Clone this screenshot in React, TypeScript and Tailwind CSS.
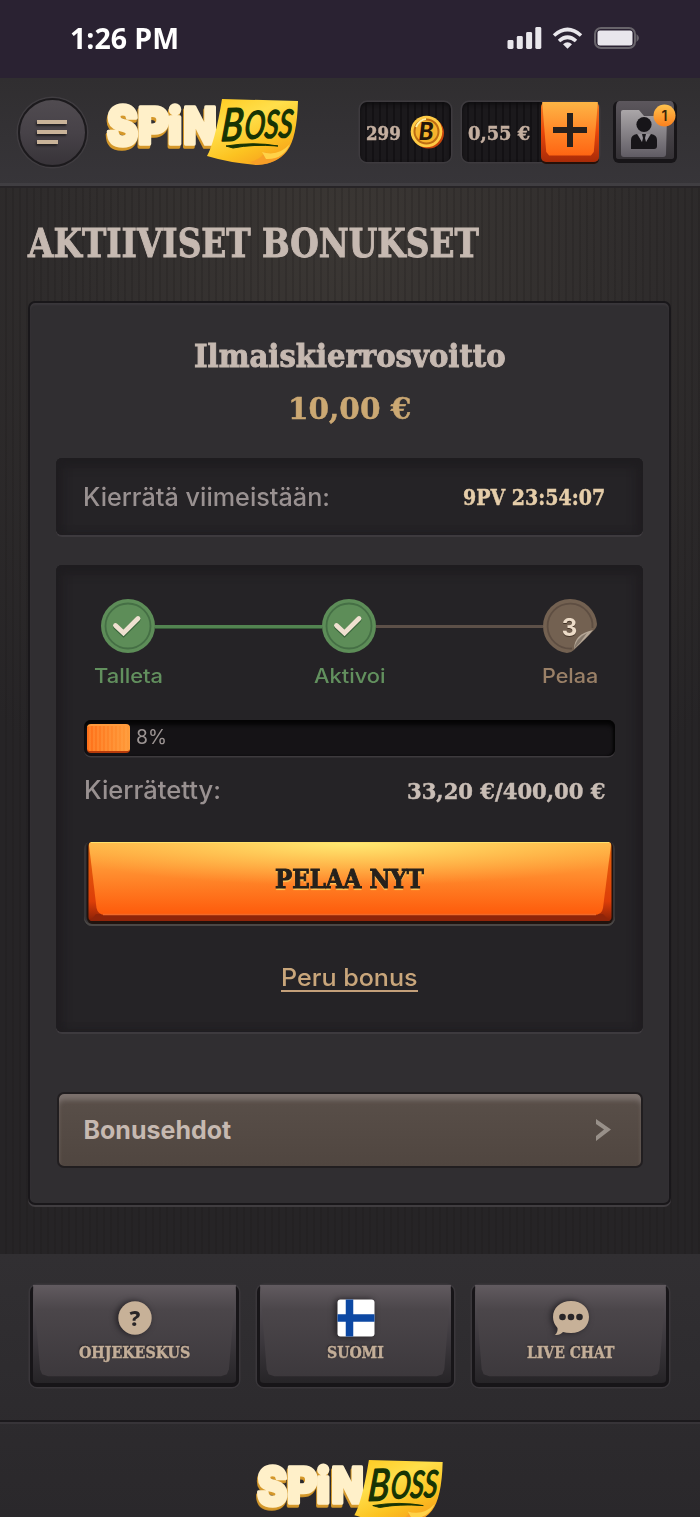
import { useLayoutEffect, useRef, useState } from "react";
import type { ReactNode } from "react";

const SLAB = "font-['DejaVu_Serif',serif] font-bold [-webkit-text-stroke:0.5px_currentColor]";
const SLAB_HEAVY = "font-['DejaVu_Serif',serif] font-bold [-webkit-text-stroke:1px_currentColor]";
const SANS = "font-['Inter',sans-serif]";

/** Single line of text condensed or stretched to a set measure. */
function Line({ w, className = "", children }: { w: number; className?: string; children: ReactNode }) {
  const ref = useRef<HTMLSpanElement>(null);
  const [scale, setScale] = useState(1);
  useLayoutEffect(() => {
    if (ref.current) setScale(w / ref.current.offsetWidth);
  }, [w]);
  return (
    <span className="flex shrink-0" style={{ width: w }}>
      <span
        ref={ref}
        className={`shrink-0 origin-left whitespace-nowrap leading-none ${className}`}
        style={{ transform: `scaleX(${scale})` }}
      >
        {children}
      </span>
    </span>
  );
}

function Logo({ id, className }: { id: string; className: string }) {
  return (
    <svg viewBox="0 0 192 68" className={`overflow-visible ${className}`} role="img" aria-label="SpinBoss">
      <defs>
        <linearGradient id={`${id}n`} x1="0" y1="0" x2="0.6" y2="1">
          <stop offset="0" stopColor="#ffc81c" />
          <stop offset="0.4" stopColor="#ffdf4b" />
          <stop offset="0.75" stopColor="#fcc321" />
          <stop offset="1" stopColor="#f8a51e" />
        </linearGradient>
      </defs>
      <g
        className="[filter:drop-shadow(-0.5px_3px_0_#d5982a)]"
        fontFamily="Inter, sans-serif"
        fontWeight="900"
        fill="#fff0c9"
        stroke="#fff0c9"
        strokeWidth="3.6"
        strokeLinejoin="round"
      >
        <text x="1" y="47" fontSize="54" textLength="31" lengthAdjust="spacingAndGlyphs">S</text>
        <text x="32" y="45.5" fontSize="51" textLength="31" lengthAdjust="spacingAndGlyphs">P</text>
        <text x="62" y="45.5" fontSize="50" textLength="14" lengthAdjust="spacingAndGlyphs">i</text>
        <text x="77.500" y="45.5" fontSize="51" textLength="33" lengthAdjust="spacingAndGlyphs">N</text>
      </g>
      <path d="M116 1L192 3Q191 40 181 53Q171 66 151 67Q124 65 101 58Q109 44 116 1Z" fill={`url(#${id}n)`} />
      <path d="M144 64Q156 61 158 54Q172 60 184 47Q174 66 151 67Q147 66 144 64Z" fill="#f79a2b" opacity=".7" />
      <path d="M156 54Q172 59 184 46Q177 62 160 61Z" fill="#ffd248" />
      <g fill="#173404" stroke="#173404" strokeWidth="1.500" strokeLinejoin="round" fontFamily="Lato, sans-serif" fontStyle="italic" fontWeight="400" transform="rotate(-2 115 44) skewX(-7)">
        <text x="119.500" y="43" fontSize="45" textLength="22" lengthAdjust="spacingAndGlyphs">B</text>
        <text x="143" y="41.5" fontSize="38" textLength="48" lengthAdjust="spacingAndGlyphs">OSS</text>
      </g>
      <path d="M120 48Q148 43.500 172 48Q147 46 127 50Z" fill="#173404" stroke="#173404" strokeWidth="1" />
    </svg>
  );
}

function StatusBar() {
  return (
    <div className="flex h-[78px] items-center justify-between bg-[#2a2232] pl-[70px] pr-[61px]">
      <Line w={109} className="-mt-[3px] font-['Open_Sans',sans-serif] text-[29px] font-bold text-white">
        1:26 PM
      </Line>
      <svg width="132" height="24" viewBox="0 0 132 24" fill="#e9e7ec">
        <rect x="0.500" y="13" width="6" height="9" rx="1.4" />
        <rect x="9.8" y="9" width="6" height="13" rx="1.4" />
        <rect x="19.1" y="5" width="6" height="17" rx="1.4" />
        <rect x="28.3" y="0" width="6" height="22" rx="1.4" />
        <g fill="none" stroke="#e9e7ec" strokeWidth="3.600">
          <path d="M47 8.500Q60.500 -3.500 74 8.500" />
          <path d="M52 14Q60.500 6.5 69 14" />
        </g>
        <path d="M56 17.2Q60.500 13.2 65 17.2L60.500 21.8Z" />
        <rect x="88" y="1" width="40" height="20" rx="6" fill="none" stroke="#68646b" strokeWidth="2" />
        <rect x="90.500" y="3.500" width="35" height="15" rx="2.5" />
        <path d="M129.5 7Q132 9 132 11Q132 13 129.5 15Z" fill="#68646b" />
      </svg>
    </div>
  );
}

const WELL =
  "bg-[#1b191c] bg-[repeating-linear-gradient(90deg,transparent_0_5px,#131114_5px_7px)] shadow-[0_0_0_1.5px_#3e3b3f,inset_0_2px_4px_#0d0c0e]";

function Header() {
  return (
    <header className="flex h-[110px] items-center border-b-2 border-[#272427] bg-gradient-to-b from-[#302e30] to-[#373539] pl-[18px] pr-[22px] shadow-[inset_0_-3px_0_#403e42]">
      <button className="flex size-[69px] shrink-0 flex-col justify-center gap-[6px] rounded-full border-2 border-[#1c1a1d] bg-gradient-to-b from-[#504b50] via-[#474248] to-[#383439] pl-[17px] shadow-[0_0_0_1.5px_#403d41]">
        <span className="h-[4px] w-[30px] bg-[#c9b399] shadow-[-1px_2px_2px_#242124]" />
        <span className="h-[4px] w-[30px] bg-[#c9b399] shadow-[-1px_2px_2px_#242124]" />
        <span className="h-[4px] w-[21px] bg-[#c9b399] shadow-[-1px_2px_2px_#242124]" />
      </button>
      <Logo id="top" className="ml-[19px] h-[68px] w-[192px] shrink-0" />
      <div className={`ml-[62px] flex h-[60px] w-[91px] shrink-0 items-center rounded-[7px] pl-[6px] ${WELL}`}>
        <Line w={35} className={`${SLAB} mt-[2px] text-[19px] text-[#c4afa0]`}>299</Line>
        <svg width="36" height="38" viewBox="0 0 36 38" className="ml-[8px]">
          <circle cx="19.5" cy="20" r="15.5" fill="#c9460c" />
          <circle cx="17.5" cy="18.5" r="15.8" fill="#ffcb45" />
          <circle cx="17.5" cy="18.5" r="12" fill="#f6b22c" stroke="#bd6c13" strokeWidth="2" />
          <path d="M7 14Q10 7 17 6" fill="none" stroke="#fff0a0" strokeWidth="2" />
          <text x="9.500" y="27" fontFamily="Lato, sans-serif" fontSize="24" fontStyle="italic" fontWeight="900" fill="#24150a" textLength="15" lengthAdjust="spacingAndGlyphs">B</text>
        </svg>
      </div>
      <div className={`ml-[11px] flex h-[60px] w-[137px] shrink-0 items-center justify-between rounded-[7px] pl-[6px] ${WELL}`}>
        <Line w={62} className={`${SLAB} mt-[2px] text-[19px] text-[#c4afa0]`}>0,55 €</Line>
        <button className="-mt-px flex h-[60px] w-[58px] items-center justify-center rounded-[5px] bg-gradient-to-b from-[#f07a20] via-[#e8460a] to-[#a82b08] shadow-[0_2px_0_#261109]">
          <span className="flex h-[60px] w-[58px] items-start justify-center bg-gradient-to-b from-[#fdb545] via-[#ff8526] to-[#fe5b0b] [clip-path:polygon(2%_1%,98%_1%,91%_84%,86%_90%,14%_90%,9%_84%)]">
            <svg width="34" height="34" viewBox="0 0 34 34" className="mr-px mt-[11px]">
              <path d="M17 0V34M0 17H34" stroke="#26201d" strokeWidth="6" />
            </svg>
          </span>
        </button>
      </div>
      <button className="ml-[14px] h-[62px] w-[64px] shrink-0 rounded-[6px] border-x-[3px] border-b-[4px] border-[#171518] bg-gradient-to-b from-[#5c575d] to-[#353236]">
        <svg width="58" height="57" viewBox="617 101 58 57" className="overflow-visible">
          <defs>
            <linearGradient id="folder" x1="0" y1="0" x2="0" y2="1">
              <stop offset="0" stopColor="#aaa6a8" />
              <stop offset="1" stopColor="#605c64" />
            </linearGradient>
            <linearGradient id="badge" x1="0" y1="0" x2="0" y2="1">
              <stop offset="0" stopColor="#ffc34e" />
              <stop offset="1" stopColor="#fb801d" />
            </linearGradient>
          </defs>
          <path d="M622 111Q622 109 624 109H640L645 115H668L667 153Q667 156 664 156H625Q622 156 622 153Z" fill="url(#folder)" />
          <circle cx="645" cy="123.5" r="7.6" fill="#171519" />
          <path d="M632 148V139Q632 134 638 133L645 144L652 133Q658 134 658 139V145Q658 148 655 148Z" fill="#171519" />
          <path d="M639 133H651L645 145Z" fill="#969298" />
          <path d="M643 133H647L646 137L647.5 143L645 146L642.5 143L644 137Z" fill="#171519" />
          <circle cx="665.500" cy="114.5" r="11" fill="url(#badge)" />
          <text x="665.500" y="119.5" textAnchor="middle" fontFamily="Inter, sans-serif" fontSize="14" fontWeight="600" fill="#3b2408">1</text>
        </svg>
      </button>
    </header>
  );
}

const INSET =
  "rounded-[6px] bg-[#252326] shadow-[0_2px_0_#3d3a3e,inset_0_8px_10px_#1f1d20,inset_-7px_0_9px_#211f22,inset_7px_0_9px_#211f22]";

function Step({ label, w, state }: { label: string; w: number; state: "done" | "next" }) {
  const done = state === "done";
  return (
    <div className="flex w-[54px] flex-col items-center">
      <svg width="54" height="54" viewBox="0 0 54 54" className="shrink-0">
        {done ? (
          <>
            <circle cx="27" cy="27" r="27" fill="#5d8d58" />
            <circle cx="27" cy="27" r="22.5" fill="#5d8d58" stroke="#456f45" strokeWidth="1.8" />
            <path d="M14.5 26.5L22.5 34L37 19.5" fill="none" stroke="#38643a" strokeWidth="4.8" strokeLinecap="round" transform="translate(0 1.5)" />
            <path d="M14.5 26.5L22.5 34L37 19.5" fill="none" stroke="#efe0d0" strokeWidth="4.8" strokeLinecap="round" />
          </>
        ) : (
          <>
            <path d="M27 0A27 27 0 0 1 54 25Q54 29 49 33L31 51Q28 54 24 54A27 27 0 0 1 0 27A27 27 0 0 1 27 0Z" fill="#736151" />
            <path d="M29 49.500A22.5 22.5 0 1 1 49.500 29" fill="none" stroke="#5e4e42" strokeWidth="1.8" />
            <path d="M31 50Q31 35 50 31Q43 40 31 50Z" fill="#b5a797" />
            <path d="M31 50Q33 39 44 34Q38 43 31 50Z" fill="#85786b" />
            <text x="26.500" y="36.500" textAnchor="middle" fontFamily="Inter, sans-serif" fontSize="24" fontWeight="700" fill="#eddcc8" className="[filter:drop-shadow(0_1.5px_0_#443427)]">3</text>
          </>
        )}
      </svg>
      <div className="mt-[13px]">
        <Line w={w} className={`${SANS} text-[20px] font-medium ${done ? "text-[#62905e]" : "text-[#9a8067]"}`}>{label}</Line>
      </div>
    </div>
  );
}

function PlayButton() {
  return (
    <button className="relative mt-[38px] flex h-[85px] w-full shrink-0 items-center justify-center rounded-[8px] shadow-[inset_0_-2px_0_#4a4745,inset_2px_-2px_0_#373436,inset_-2px_-2px_0_#373436]">
      <svg className="absolute inset-0" width="531" height="85" viewBox="0 0 531 85">
        <defs>
          <linearGradient id="playFace" x1="0" y1="0" x2="0" y2="1">
            <stop offset="0" stopColor="#ffb748" />
            <stop offset=".45" stopColor="#ff8b2d" />
            <stop offset="1" stopColor="#fe5a0b" />
          </linearGradient>
          <linearGradient id="playSide" x1="0" y1="0" x2="0" y2="1">
            <stop offset="0" stopColor="#e8650d" />
            <stop offset=".75" stopColor="#dc3d08" />
            <stop offset="1" stopColor="#8a2107" />
          </linearGradient>
          <radialGradient id="playGlow" cx=".5" cy="0" r=".6">
            <stop offset="0" stopColor="#fff178" stopOpacity=".9" />
            <stop offset="1" stopColor="#ffd25a" stopOpacity="0" />
          </radialGradient>
        </defs>
        <rect x="3" y="1" width="526" height="82" rx="6" fill="#21130e" />
        <rect x="4.5" y="1" width="523" height="79" rx="4" fill="url(#playSide)" />
        <path d="M12 73H519L526 80H6Z" fill="#8f2409" />
        <path d="M5 4Q5 1 8 1H524Q527 1 527 4L519 67Q518 74 510 74H21Q14 74 12.5 67Z" fill="url(#playFace)" />
        <path d="M5 4Q5 1 8 1H524Q527 1 527 4L519 67Q518 74 510 74H21Q14 74 12.5 67Z" fill="url(#playGlow)" />
        <path d="M19 73.5H512" stroke="#f26929" strokeWidth="1.5" />
        <path d="M7 1.5H525" stroke="#ffe06b" strokeWidth="1" />
      </svg>
      <span className="relative -mt-[9px]">
        <Line w={149} className={`${SLAB_HEAVY} text-[26px] text-[#26211c] [text-shadow:0_2px_1px_#ffc95a]`}>PELAA NYT</Line>
      </span>
    </button>
  );
}

function BonusCard() {
  return (
    <section className="ml-[28px] mr-[29px] flex h-[904px] flex-col items-center rounded-[7px] border-2 border-[#19171a] bg-[#302e31] px-[26px] shadow-[0_2px_0_#403d40,inset_0_2px_2px_#3a373b]">
      <h2 className="mt-[37px]">
        <Line w={312} className={`${SLAB_HEAVY} text-[32px] text-[#c6b9b1]`}>Ilmaiskierrosvoitto</Line>
      </h2>
      <div className="mt-[22px]">
        <Line w={123} className={`${SLAB} text-[30px] text-[#cba873]`}>10,00 €</Line>
      </div>
      <div className={`mt-[34px] flex h-[77px] w-full shrink-0 items-center justify-between pl-[27px] pr-[38px] ${INSET}`}>
        <Line w={247} className={`${SANS} mt-px text-[25px] font-medium text-[#999191]`}>Kierrätä viimeistään:</Line>
        <Line w={142} className={`${SLAB} text-[23px] text-[#e5cda9]`}>9PV 23:54:07</Line>
      </div>
      <div className={`mt-[30px] flex h-[467px] w-full shrink-0 flex-col px-[28px] ${INSET}`}>
        <div className="mt-[34px] flex items-start justify-between pl-[17px] pr-[18px]">
          <Step label="Talleta" w={69} state="done" />
          <div className="mt-[26px] h-[3px] flex-1 bg-[#538451] shadow-[0_1px_0_#365a38]" />
          <Step label="Aktivoi" w={71} state="done" />
          <div className="mt-[26px] h-[3px] flex-1 bg-[#5d5048]" />
          <Step label="Pelaa" w={56} state="next" />
        </div>
        <div className="mt-[34px] flex h-[36px] shrink-0 items-center rounded-[7px] bg-[#151316] pl-[3px] shadow-[0_1.5px_0_#3d3a3d,inset_0_5px_4px_#050505,inset_-2px_0_2px_#080708]">
          <div className="h-[29px] w-[43px] rounded-[4px] border-y-2 border-b-[#b83b0a] border-t-[#ff9a3c] bg-[repeating-linear-gradient(90deg,#ff9b3a00_0_2px,#ffad5540_2px_4px),linear-gradient(90deg,#ff7019,#ff9b3a)]" />
          <div className="-mt-[2px] ml-[6px]">
            <Line w={31} className={`${SANS} text-[20px] text-[#9d9594]`}>8%</Line>
          </div>
        </div>
        <div className="mt-[22px] flex items-center justify-between pr-[10px]">
          <Line w={137} className={`${SANS} text-[25px] font-medium text-[#999191]`}>Kierrätetty:</Line>
          <Line w={198} className={`${SLAB} text-[23px] text-[#c9bdb5]`}>33,20 €/400,00 €</Line>
        </div>
        <PlayButton />
        <a className="mx-auto mt-[40px] block border-b-2 border-[#c4a07a]">
          <Line w={137} className={`${SANS} text-[24px] font-medium text-[#c9a67b]`}>Peru bonus</Line>
        </a>
      </div>
      <button className="mt-[60px] flex h-[76px] w-[586px] shrink-0 items-center justify-between rounded-[7px] border-2 border-[#211e20] bg-gradient-to-b from-[#594f49] to-[#504640] pl-[25px] pr-[30px] shadow-[inset_0_7px_5px_-1px_#7b716d]">
        <Line w={148} className={`${SANS} text-[25px] font-bold text-[#c6b9b1]`}>Bonusehdot</Line>
        <svg width="16" height="22" viewBox="0 0 16 22">
          <path d="M1 0L16 10.5L1 22V17L9 10.5L1 5Z" fill="#989089" />
        </svg>
      </button>
    </section>
  );
}

function FooterButton({ label, w, width, children }: { label: string; w: number; width: number; children: ReactNode }) {
  return (
    <button
      className="h-[102px] shrink-0 rounded-[7px] border-x-[3px] border-b-[4px] border-[#171518] bg-gradient-to-b from-[#5b5559] via-[#403c41] to-[#262427] shadow-[0_0_0_1.5px_#3a373b]"
      style={{ width }}
    >
      <span className="flex h-[98px] w-full flex-col items-center bg-gradient-to-b from-[#625b60] via-[#4b464a] via-25% to-[#3b373b] pt-[13px] [clip-path:polygon(0_0,100%_0,96.500%_86%,95.500%_91%,92.500%_93%,7.500%_93%,4.500%_91%,3.500%_86%)]">
        <span className="flex h-[40px] items-center [filter:drop-shadow(-2px_0_3px_#211e22)]">{children}</span>
        <span className="mt-[6px]">
          <Line w={w} className={`${SLAB} text-[17px] text-[#c3ae98] [text-shadow:-1px_-1px_2px_#252125]`}>{label}</Line>
        </span>
      </span>
    </button>
  );
}

function Footer() {
  return (
    <footer className="h-[263px] bg-gradient-to-b from-[#312f32] to-[#2a282b]">
      <div className="flex h-[168px] items-start justify-between border-b-2 border-[#1b191c] pl-[30px] pr-[31px] pt-[31px] shadow-[0_2px_0_#373438]">
        <FooterButton label="OHJEKESKUS" w={111} width={209}>
          <svg width="34" height="34" viewBox="0 0 34 34">
            <circle cx="17" cy="17" r="16.7" fill="#c7b198" />
            <text x="17" y="24.5" textAnchor="middle" fontFamily="Noto Sans, sans-serif" fontSize="22" fontWeight="800" fill="#292628">?</text>
          </svg>
        </FooterButton>
        <FooterButton label="SUOMI" w={57} width={197}>
          <svg width="38" height="38" viewBox="0 0 38 38">
            <rect x=".5" y=".5" width="37" height="37" rx="3" fill="#fff" />
            <path d="M12.5 .5V37.5M.5 19H37.5" stroke="#0c48a3" strokeWidth="7.5" />
          </svg>
        </FooterButton>
        <FooterButton label="LIVE CHAT" w={87} width={197}>
          <svg width="38" height="36" viewBox="0 0 38 36">
            <path d="M19 1C30 1 37 8 37 17S30 33 19 33Q14 33 11 32Q8 35.5 3 35Q6 32 5.500 28Q1 23 1 17C1 8 8 1 19 1Z" fill="#c7b198" />
            <g fill="#292628">
              <circle cx="10.500" cy="17" r="3.300" />
              <circle cx="19" cy="17" r="3.300" />
              <circle cx="27.500" cy="17" r="3.300" />
            </g>
          </svg>
        </FooterButton>
      </div>
      <Logo id="bottom" className="ml-[256px] mt-[37px] h-[66px] w-[187px]" />
    </footer>
  );
}

export default function App() {
  return (
    <div className="flex h-[1517px] w-[700px] flex-col overflow-hidden bg-[#262426]">
      <StatusBar />
      <Header />
      <main className="h-[1066px] shrink-0 bg-[repeating-linear-gradient(90deg,transparent_0_5px,#1a171733_5px_7px),radial-gradient(ellipse_75%_60%_at_50%_5%,#3b3734,#262426)]">
        <h1 className="flex h-[113px] items-center pb-[2px] pl-[28px]">
          <Line w={451} className={`${SLAB_HEAVY} text-[39px] text-[#c6b9b1]`}>AKTIIVISET BONUKSET</Line>
        </h1>
        <BonusCard />
      </main>
      <Footer />
    </div>
  );
}
